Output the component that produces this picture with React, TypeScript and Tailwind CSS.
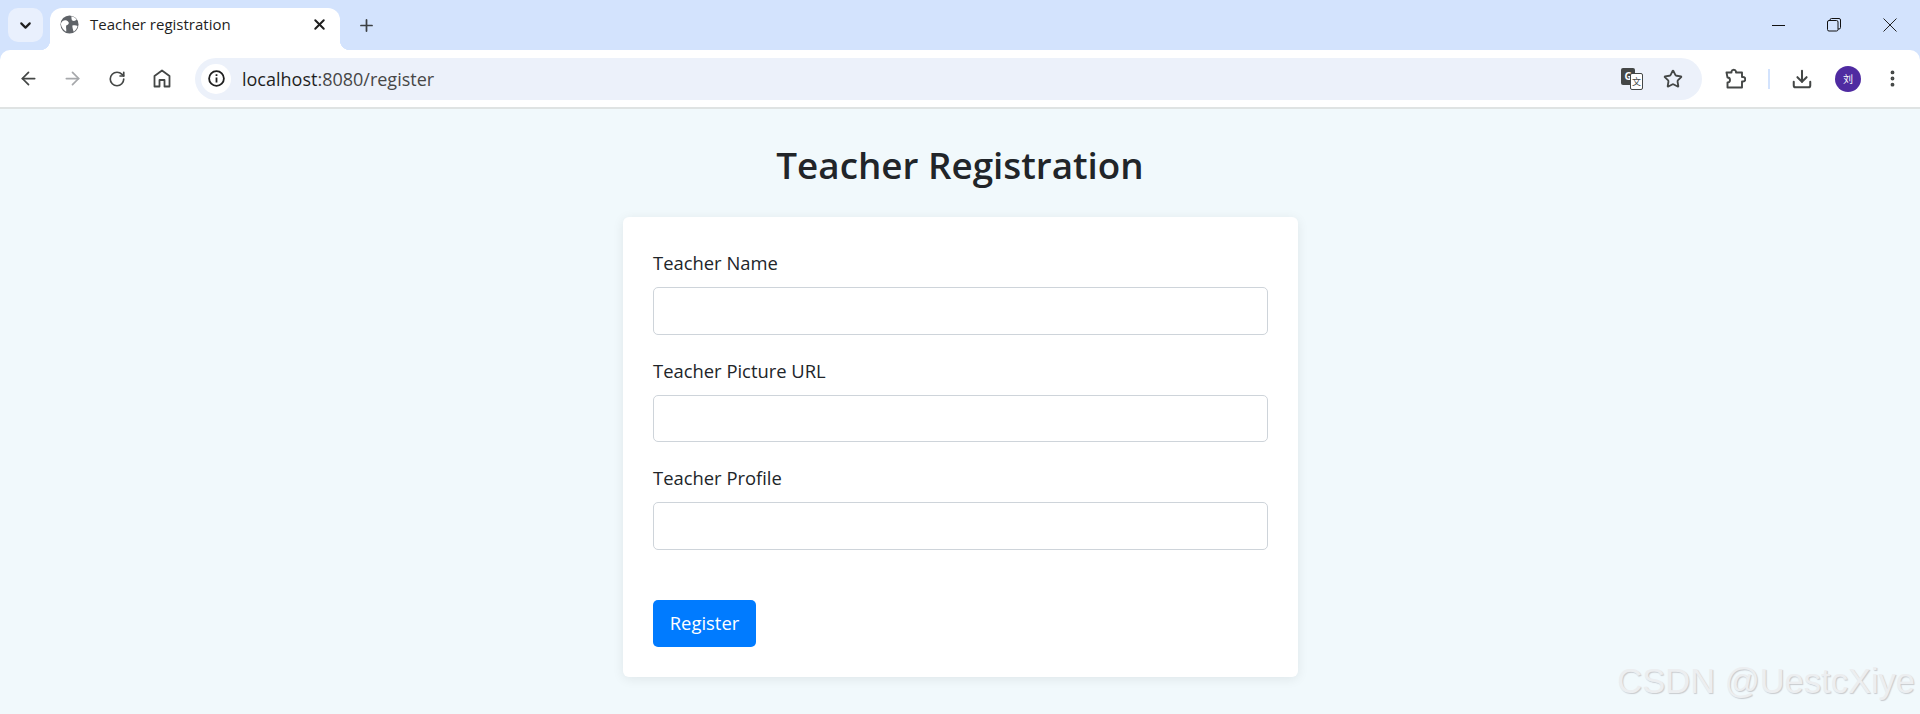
import { ArrowLeft, ArrowRight, ChevronDown, Download, EllipsisVertical, Plus, RotateCw, Star, X } from "lucide-react";

const pageFont = "font-['Open_Sans','Noto_Sans',sans-serif]";

function Field({ label }: { label: string }) {
  return (
    <div className="mb-5">
      <label className="mb-[10px] block h-[30px] pt-[1px] text-[18.4px] leading-[30px] text-[#212529]">{label}</label>
      <input type="text" className="block h-[47.5px] w-full rounded-[5px] border border-[#ced4da] bg-white" />
    </div>
  );
}

function TabStrip() {
  return (
    <div className="flex h-[50px] bg-[#d3e3fd] pl-2">
      <button className="mt-2 flex h-[34px] w-[35px] items-center justify-center rounded-[10px] bg-[#e9f0fd]">
        <ChevronDown size={17} strokeWidth={3} className="text-[#1f1f1f]" />
      </button>
      <div className="relative mt-2 ml-[7px] flex h-[42px] w-[290px] items-center rounded-t-[12px] bg-white pr-[12px] pb-[9px] pl-[10px]">
        <span className="absolute bottom-0 left-[-10px] h-[10px] w-[10px] bg-[radial-gradient(circle_at_0_0,transparent_10px,white_10.5px)]" />
        <span className="absolute right-[-10px] bottom-0 h-[10px] w-[10px] bg-[radial-gradient(circle_at_100%_0,transparent_10px,white_10.5px)]" />
        <svg width="19" height="19" viewBox="0 0 20 20" className="shrink-0">
          <circle cx="10" cy="10" r="9.5" fill="#5f6368" />
          <path d="M2.5 6.5C5 5 7.5 5.5 9 7.5 10 9 8 10.5 6.5 11 6 13 7 15 6.5 17.5 3.5 16 1.5 13 1 10 1 8.5 1.5 7.5 2.5 6.5Z" fill="#fff" />
          <path d="M12 1.2C14.5 1.5 16.5 3 17.5 5 16 6.5 14 6.5 12.5 5.5 12 4 12 2.5 12 1.2ZM13 11C15 10.5 17 10.5 18.5 11.5 18 14 16.5 16 14.5 17.5 13.5 15.5 13 13 13 11Z" fill="#fff" />
        </svg>
        <span className="ml-[11px] flex-1 text-[15px] whitespace-nowrap text-[#1f1f1f]">Teacher registration</span>
        <X size={17} strokeWidth={2.8} className="text-[#1f1f1f]" />
      </div>
      <div className="ml-[13px] flex h-[50px] w-[26px] items-center justify-center">
        <Plus size={19} strokeWidth={2.2} className="text-[#3c4043]" />
      </div>
      <div className="flex-1" />
      <div className="flex h-[50px] items-center text-[#1f1f1f]">
        <div className="flex w-[56px] justify-center">
          <div className="h-px w-[13px] bg-[#111]" />
        </div>
        <div className="flex w-[56px] justify-center">
          <svg width="14" height="14" viewBox="0 0 14 14" fill="none" stroke="#111" strokeWidth="1">
            <rect x="0.5" y="2.5" width="10.5" height="10.5" rx="1.5" />
            <path d="M3 2.5V2A1.5 1.5 0 0 1 4.5.5H12A1.5 1.5 0 0 1 13.5 2V9.5A1.5 1.5 0 0 1 12 11H11" />
          </svg>
        </div>
        <div className="flex w-[58px] justify-center pr-[3px]">
          <svg width="14" height="14" viewBox="0 0 14 14" stroke="#222" strokeWidth="1">
            <path d="M.5.5 13.5 13.5M13.5.5.5 13.5" />
          </svg>
        </div>
      </div>
    </div>
  );
}

function Toolbar() {
  return (
    <div className="bg-[#d3e3fd]">
      <div className="flex h-[57px] items-center rounded-t-[10px] bg-white pl-[6px]">
        <div className="flex w-[44px] justify-center">
          <ArrowLeft size={21} strokeWidth={2} className="text-[#444746]" />
        </div>
        <div className="flex w-[44px] justify-center">
          <ArrowRight size={21} strokeWidth={2} className="text-[#a6a8ab]" />
        </div>
        <div className="flex w-[44px] justify-center pl-[2px]">
          <RotateCw size={18} strokeWidth={2.2} className="text-[#444746]" />
        </div>
        <div className="flex w-[44px] justify-center pl-1">
          <svg width="18" height="19" viewBox="0 0 18 19" fill="none" stroke="#444746" strokeWidth="1.8" strokeLinejoin="round">
            <path d="M1.5 17.5V7L9 1.5 16.5 7V17.5H11.5V11H6.5V17.5Z" />
          </svg>
        </div>
        <div className="ml-[13px] flex h-[42px] flex-1 items-center rounded-full bg-[#ecf1fa] pr-[19px] pl-[6px]">
          <div className="flex h-[30px] w-[30px] items-center justify-center rounded-full bg-white">
            <svg width="17" height="17" viewBox="0 0 17 17" fill="none" stroke="#1f1f1f" strokeWidth="1.8">
              <circle cx="8.5" cy="8.5" r="7.4" />
              <path d="M8.5 7.5V12.5M8.5 4.2V6" />
            </svg>
          </div>
          <span className="ml-[11px] flex-1 text-[18px] leading-none whitespace-nowrap text-[#1f1f1f]">
            localhost<span className="text-[#474747]">:8080/register</span>
          </span>
          <div className="relative mr-[20px] h-[22px] w-[22px]">
            <div className="absolute top-0 left-0 flex h-[17px] w-[14px] items-center justify-center rounded-[2px] bg-[#444746] text-[10px] leading-none font-bold text-white">G</div>
            <div className="absolute right-0 bottom-0 flex h-[17px] w-[13px] items-center justify-center rounded-[2px] border border-[#444746] bg-white font-['Noto_Sans_CJK_SC',sans-serif] text-[9px] leading-none text-[#444746]">文</div>
          </div>
          <Star size={20} strokeWidth={2.2} className="text-[#444746]" />
        </div>
        <div className="flex w-[66px] justify-center pl-[1px]">
          <svg width="21" height="21" viewBox="0 0 21 21" fill="none" stroke="#444746" strokeWidth="1.9" strokeLinejoin="round">
            <path d="M1.5 4.5H6.5V3.5A2.3 2.3 0 0 1 11 3.5V4.5H17V9H18A2 2 0 0 1 18 13.5H17V19.5H2.5V14.5A2.5 2.5 0 0 0 2.5 9.5Z" />
          </svg>
        </div>
        <div className="h-[20px] w-[2px] bg-[#d3e3fd]" />
        <div className="ml-[10px] flex w-[44px] justify-center">
          <Download size={22} strokeWidth={2.2} className="text-[#444746]" />
        </div>
        <div className="ml-[11px] flex h-[26px] w-[26px] items-center justify-center rounded-full bg-[#4f2ba1] font-['Noto_Sans_CJK_SC',sans-serif] text-[10px] text-white">刘</div>
        <div className="ml-[9px] flex w-[44px] justify-center">
          <EllipsisVertical size={21} strokeWidth={2.4} className="text-[#444746]" />
        </div>
        <div className="w-[6px]" />
      </div>
      <div className="h-[2px] bg-[#dfe3e3]" />
    </div>
  );
}

export default function App() {
  return (
    <div className={`relative flex h-[714px] flex-col overflow-hidden bg-[#f1f9fc] ${pageFont}`}>
      <TabStrip />
      <Toolbar />
      <main className="flex flex-col items-center pt-[32px]">
        <h1 className="mb-[28px] h-[48px] text-[36.8px] leading-[48px] font-semibold text-[#212529]">Teacher Registration</h1>
        <form className="ml-[1px] w-[675px] rounded-[6px] bg-white p-[30px] shadow-[0_2px_12px_rgba(0,0,0,0.08)]">
          <Field label="Teacher Name" />
          <Field label="Teacher Picture URL" />
          <Field label="Teacher Profile" />
          <button type="button" className="mt-[50px] block h-[47.5px] w-[103px] rounded-[5px] bg-[#007bff] text-[18.4px] text-white">Register</button>
        </form>
      </main>
      <div className="absolute right-[5px] bottom-[16px] font-['Liberation_Sans',sans-serif] text-[34.5px] leading-none text-[#eceef0] [text-shadow:1px_1px_1px_#c8cbcf]">CSDN @UestcXiye</div>
    </div>
  );
}
